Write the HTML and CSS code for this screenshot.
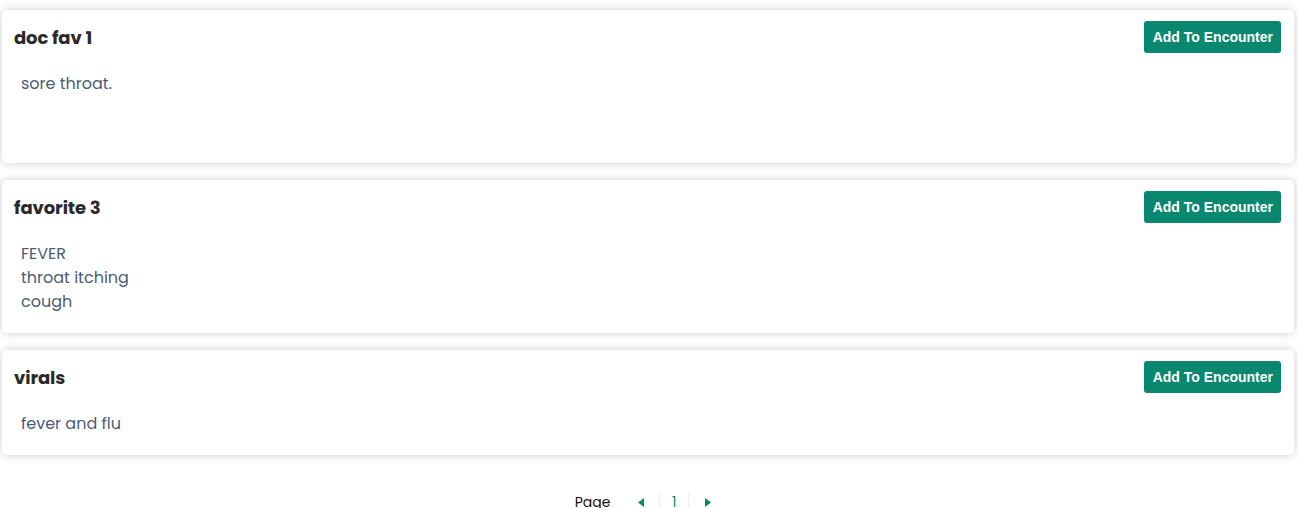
FILE: index.html
```html
<!DOCTYPE html>
<html lang="en">
<head>
    <meta charset="UTF-8">
    <meta name="viewport" content="width=device-width, initial-scale=1.0">
    <title>Favorites</title>
    <link rel="stylesheet" href="styles.css">
</head>
<body>
    <div class="fav-list">
        <!-- Favorite notes -->
        <div class="fav-card">
            <div class="fav-header">
                <h2 class="fav-title">doc fav 1</h2>
                <button class="btn-add">Add To Encounter</button>
            </div>
            <div class="fav-body">sore throat.<br><br><br></div>
        </div>

        <div class="fav-card">
            <div class="fav-header">
                <h2 class="fav-title">favorite 3</h2>
                <button class="btn-add">Add To Encounter</button>
            </div>
            <div class="fav-body">FEVER<br>throat itching<br>cough</div>
        </div>

        <div class="fav-card">
            <div class="fav-header">
                <h2 class="fav-title">virals</h2>
                <button class="btn-add">Add To Encounter</button>
            </div>
            <div class="fav-body">fever and flu</div>
        </div>
    </div>

    <!-- Paginacao -->
    <div class="pager">
        <span class="pager-label">Page</span>
        <button class="pager-arrow">
            <svg width="6" height="9" viewBox="0 0 6 9"><path d="M6 0 L0 4.5 L6 9 Z" fill="#0a876f"/></svg>
        </button>
        <span class="pager-num">1</span>
        <button class="pager-arrow next">
            <svg width="6" height="9" viewBox="0 0 6 9"><path d="M0 0 L6 4.5 L0 9 Z" fill="#0a876f"/></svg>
        </button>
    </div>
</body>
</html>
```

FILE: styles.css
```css
* {
    box-sizing: border-box;
    margin: 0;
    padding: 0;
}

body {
    font-family: "Poppins", "Open Sans", sans-serif;
    background-color: #ffffff;
    padding: 10px 4px 0 2px;
}

.fav-list {
    display: flex;
    flex-direction: column;
    gap: 17px;
}

.fav-card {
    background-color: #ffffff;
    border-radius: 5px;
    box-shadow: 0 0 10px rgba(0, 0, 0, 0.2);
}

.fav-header {
    display: flex;
    justify-content: space-between;
    align-items: center;
    padding: 11px 13px 0 12px;
}

.fav-title {
    font-size: 18px;
    font-weight: 700;
    color: #2a2a2a;
    letter-spacing: -0.1px;
}

.btn-add {
    font-family: "Liberation Sans", Arial, sans-serif;
    font-size: 14px;
    font-weight: 700;
    color: #ffffff;
    background-color: #0a876f;
    border: none;
    border-radius: 3px;
    height: 32px;
    padding: 0 8px 0 9px;
}

.fav-body {
    padding: 19px 19px;
    font-size: 16px;
    line-height: 24px;
    color: #4a5d74;
}

.pager {
    display: flex;
    justify-content: center;
    align-items: center;
    margin-top: 37px;
    padding-left: 6px;
    font-size: 14px;
}

.pager-label {
    color: #111111;
    margin-right: 13px;
}

.pager-arrow {
    background: none;
    border: none;
    width: 36px;
    height: 20px;
    display: flex;
    align-items: center;
    justify-content: center;
}

.pager-arrow.next {
    width: 38px;
}

.pager-num {
    color: #0a876f;
    width: 30px;
    text-align: center;
    border-left: 1px solid #f0f0f0;
    border-right: 1px solid #f0f0f0;
}
```
